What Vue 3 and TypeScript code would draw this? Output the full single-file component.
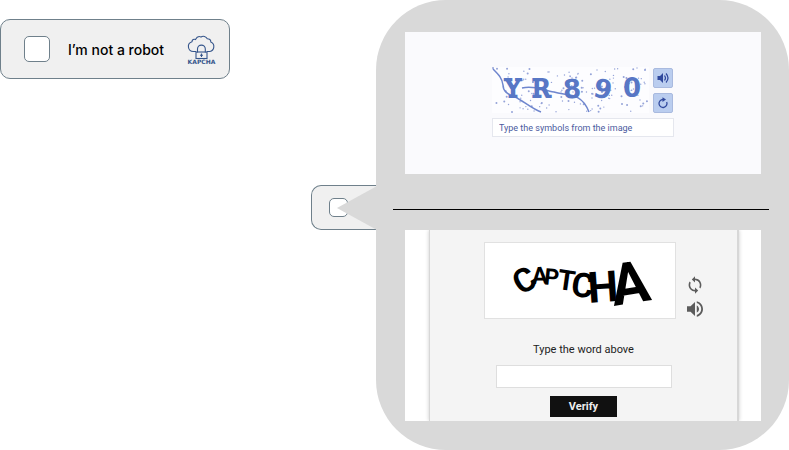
<script setup lang="ts">
import { ref } from 'vue'

interface Glyph {
  char: string
  x: number
  y: number
  size: number
  angle: number
}

const confirmed = ref(false)
const miniConfirmed = ref(false)
const symbols = ref('')
const word = ref('')

const code: Glyph[] = [
  { char: 'Y', x: 513, y: 97, size: 24, angle: 0 },
  { char: 'R', x: 541, y: 97, size: 24, angle: 0 },
  { char: '8', x: 572, y: 98, size: 26, angle: -3 },
  { char: '9', x: 603, y: 98, size: 26, angle: 12 },
  { char: '0', x: 632, y: 97, size: 26, angle: 0 },
]

const warped: Glyph[] = [
  { char: 'C', x: 530, y: 290, size: 33, angle: -30 },
  { char: 'A', x: 540, y: 284, size: 24, angle: -2 },
  { char: 'P', x: 551, y: 285, size: 23, angle: 6 },
  { char: 'T', x: 565, y: 290, size: 28, angle: 8 },
  { char: 'C', x: 581, y: 297, size: 34, angle: 8 },
  { char: 'H', x: 604, y: 302, size: 43, angle: -4 },
  { char: 'A', x: 633, y: 303, size: 58, angle: -9 },
]

// Deterministic speckles scattered over the code picture
const dots = Array.from({ length: 150 }, (_, i) => ({
  x: 493 + ((i * 97.3 + i * i * 0.37) % 155),
  y: 68 + ((i * 41.7 + i * i * 0.91) % 44),
  r: i % 3 === 0 ? 1 : 0.7,
}))
</script>

<template>
  <main class="page">
    <section class="left">
      <div class="robot">
        <label class="robot-label">
          <input v-model="confirmed" type="checkbox" class="box" />
          <span>I’m not a robot</span>
        </label>
        <svg class="logo" viewBox="187 34 29 31" aria-label="Kapcha">
          <g fill="none" stroke="#35558b" stroke-width="1.1">
            <path d="M196 51.500h-2.500a5 5 0 0 1-1.500-9.800c0-2 2-3 3.500-2.200C197 36.500 199 36 201 37c2-1.300 5-.7 6.300 1.700 2 0 3.600 1 3.500 3.300a5 5 0 0 1-1 9.500h-3" />
            <path d="M197.500 52.500V49a3.900 3.900 0 0 1 7.800 0v3.500" />
            <rect x="196" y="52" width="11" height="6.500" />
            <path d="M201.500 53.500v3.500M200 55.200h3" />
          </g>
          <text x="201.500" y="64" text-anchor="middle" class="logo-text">KAPCHA</text>
        </svg>
      </div>
      <div class="mini">
        <input v-model="miniConfirmed" type="checkbox" class="box small" aria-label="I’m not a robot" />
        <svg class="pointer" viewBox="0 0 40 44" aria-hidden="true">
          <path d="M0 22L40 0V44Z" fill="#d9d9d9" />
        </svg>
      </div>
    </section>

    <section class="bubble">
      <div class="panel symbols">
        <div class="code-row">
          <svg class="code" viewBox="492 67 157 46" role="img" aria-label="YR890">
            <rect x="492" y="67" width="157" height="46" fill="#fdfdff" />
            <circle v-for="(d, i) in dots" :key="i" :cx="d.x" :cy="d.y" :r="d.r" fill="#95a3d8" />
            <path d="M493 69c6 6 9 9 10 16 0 6 4 9 12 12 7 3 17 12 26 15M522 88c14-3 22 3 32 4 12 4 27-1 35 20" fill="none" stroke="#6f86ce" stroke-width="1.500" />
            <text
              v-for="g in code"
              :key="g.char"
              :x="g.x"
              :y="g.y"
              :font-size="g.size"
              :transform="`rotate(${g.angle} ${g.x} ${g.y - 9})`"
              text-anchor="middle"
              class="code-char"
              :class="{ serif: g.char === 'Y' || g.char === 'R' }"
            >{{ g.char }}</text>
          </svg>
          <div class="tools">
            <button type="button" class="tool" aria-label="Play audio">
              <svg viewBox="0 0 14 14">
                <path d="M1.500 5h2.500l3-3v10l-3-3H1.500z" fill="#30499d" />
                <path d="M8.500 4.500q2 2.500 0 5M10 2.500q4 4.500 0 9" fill="none" stroke="#30499d" stroke-width="1.200" />
              </svg>
            </button>
            <button type="button" class="tool" aria-label="New image">
              <svg viewBox="0 0 14 14">
                <path d="M10.700 6A4 4 0 1 1 7 3.500" fill="none" stroke="#30499d" stroke-width="1.300" />
                <path d="M6.500 1.200l3.500 2.400L6.500 6z" fill="#30499d" />
              </svg>
            </button>
          </div>
        </div>
        <input v-model="symbols" class="symbols-input" type="text" placeholder="Type the symbols from the image" aria-label="Type the symbols from the image" />
      </div>

      <hr class="divider" />

      <div class="panel word">
        <form class="sheet" @submit.prevent>
          <div class="word-row">
            <svg class="word-image" viewBox="485 243 190 75" role="img" aria-label="CAPTCHA">
              <text
                v-for="(g, i) in warped"
                :key="i"
                :x="g.x"
                :y="g.y"
                :font-size="g.size"
                :transform="`rotate(${g.angle} ${g.x} ${g.y})`"
                text-anchor="middle"
                class="warped-char"
              >{{ g.char }}</text>
            </svg>
            <div class="word-tools">
              <button type="button" class="plain" aria-label="New word">
                <svg viewBox="3 2 18 20">
                  <path d="M12 4V1L8 5l4 4V6c3.310 0 6 2.690 6 6 0 1.010-.25 1.970-.7 2.800l1.460 1.460C19.540 15.030 20 13.570 20 12c0-4.420-3.580-8-8-8zm0 14c-3.310 0-6-2.690-6-6 0-1.010.25-1.970.7-2.800L5.240 7.740C4.460 8.970 4 10.430 4 12c0 4.420 3.580 8 8 8v3l4-4-4-4v3z" fill="#5c5c5c" />
                </svg>
              </button>
              <button type="button" class="plain" aria-label="Play word">
                <svg viewBox="3 3 18 18">
                  <path d="M3 9v6h4l5 5V4L7 9H3zm13.500 3c0-1.770-1.020-3.290-2.500-4.030v8.050c1.480-.73 2.500-2.250 2.500-4.020zM14 3.230v2.060c2.890.86 5 3.540 5 6.710s-2.110 5.850-5 6.710v2.060c4.010-.91 7-4.490 7-8.770s-2.990-7.860-7-8.770z" fill="#5c5c5c" />
                </svg>
              </button>
            </div>
          </div>
          <label for="word" class="word-label">Type the word above</label>
          <input id="word" v-model="word" type="text" class="word-input" />
          <button type="submit" class="verify">Verify</button>
        </form>
      </div>
    </section>
  </main>
</template>

<style>
body {
  margin: 0;
  background: #fff;
}
</style>

<style scoped>
* {
  box-sizing: border-box;
}
.page {
  display: grid;
  grid-template-columns: 376fr 413fr;
  min-height: 100vh;
  font-family: Inter, 'Liberation Sans', sans-serif;
  color: #000;
}
svg {
  display: block;
  overflow: visible;
}
.left {
  display: flex;
  flex-direction: column;
  align-items: flex-start;
  gap: 106px;
  padding-top: 19px;
}
.robot {
  display: flex;
  align-items: center;
  justify-content: space-between;
  width: 230px;
  height: 60px;
  padding: 0 13px 0 23px;
  border: 1px solid #6f808b;
  border-radius: 10px;
  background: #f0f0f0;
}
.robot-label {
  display: flex;
  align-items: center;
  gap: 18px;
  font-size: 14px;
  font-weight: 500;
  white-space: nowrap;
}
.box {
  appearance: none;
  flex: none;
  width: 26px;
  height: 26px;
  margin: 0;
  border: 1px solid #6f808b;
  border-radius: 5px;
  background: #fff;
}
.box.small {
  width: 19px;
  height: 19px;
}
.logo {
  width: 29px;
  height: 31px;
}
.logo-text {
  font: 700 6px 'DejaVu Sans', sans-serif;
  fill: #35558b;
}
.mini {
  position: relative;
  display: flex;
  align-items: center;
  align-self: flex-end;
  width: 65px;
  height: 45px;
  padding-left: 17px;
  border: 1px solid #6f808b;
  border-right: 0;
  border-radius: 10px 0 0 10px;
  background: #f0f0f0;
}
.pointer {
  position: absolute;
  top: 0;
  right: -1px;
  width: 40px;
  height: 44px;
}
.bubble {
  display: flex;
  flex-direction: column;
  padding: 32px 28px 29px 29px;
  border-radius: 70px;
  background: #d9d9d9;
}
.panel {
  display: flex;
}
.symbols {
  flex-direction: column;
  align-items: center;
  gap: 5px;
  height: 142px;
  padding-top: 35px;
  background: #fafafd;
}
.code-row {
  display: flex;
  gap: 4px;
  width: 182px;
}
.code {
  width: 157px;
  height: 46px;
}
.code-char {
  font-family: 'DejaVu Sans', sans-serif;
  font-weight: 700;
  fill: #5877c5;
}
.code-char.serif {
  font-family: 'DejaVu Serif', serif;
  font-weight: 400;
  stroke: #5877c5;
  stroke-width: 2;
}
.tools {
  display: flex;
  flex-direction: column;
  justify-content: space-between;
  padding-top: 1px;
}
.tool {
  display: grid;
  place-items: center;
  width: 20px;
  height: 20px;
  padding: 0;
  border: 1px solid #a9badf;
  border-radius: 2px;
  background: #bacdef;
}
.tool svg {
  width: 14px;
  height: 14px;
}
.symbols-input {
  width: 182px;
  height: 19px;
  padding: 0 6px;
  border: 1px solid #e5e7ee;
  background: #fff;
  color: #4b5ba0;
  font: 9px Roboto, sans-serif;
}
.symbols-input::placeholder {
  color: #4b5ba0;
  opacity: 1;
}
.divider {
  align-self: stretch;
  height: 1px;
  margin: 35px -8px 20px -12px;
  border: 0;
  background: #000;
}
.word {
  height: 191px;
  padding: 0 22px 0 24px;
  overflow: hidden;
  background: #fff;
}
.sheet {
  display: flex;
  flex: 1;
  flex-direction: column;
  align-items: center;
  padding-top: 12px;
  border: solid #d7d7d7;
  border-width: 0 2px 0 1px;
  background: #f4f4f4;
  box-shadow: 0 0 4px #ccc;
  font-family: Roboto, sans-serif;
}
.word-row {
  display: flex;
  gap: 11px;
  margin-left: 20px;
}
.word-image {
  width: 192px;
  height: 77px;
  border: 1px solid #e1e1e1;
  background: #fff;
}
.warped-char {
  font-family: Roboto, 'Liberation Sans', sans-serif;
  font-weight: 700;
}
.word-tools {
  display: flex;
  flex-direction: column;
  justify-content: flex-end;
  gap: 8px;
  padding-bottom: 2px;
}
.plain {
  width: 16px;
  height: 16px;
  padding: 0;
  border: 0;
  background: none;
}
.plain svg {
  width: 16px;
  height: 16px;
}
.word-label {
  margin: 23px 0 8px;
  color: #222;
  font-size: 11px;
  line-height: 15px;
}
.word-input {
  width: 176px;
  height: 23px;
  padding: 0 6px;
  border: 1px solid #dedede;
  background: #fff;
}
.verify {
  width: 67px;
  height: 21px;
  margin-top: 8px;
  padding: 0;
  border: 0;
  background: #111;
  color: #eee;
  font: 700 11px Roboto, sans-serif;
}
</style>
